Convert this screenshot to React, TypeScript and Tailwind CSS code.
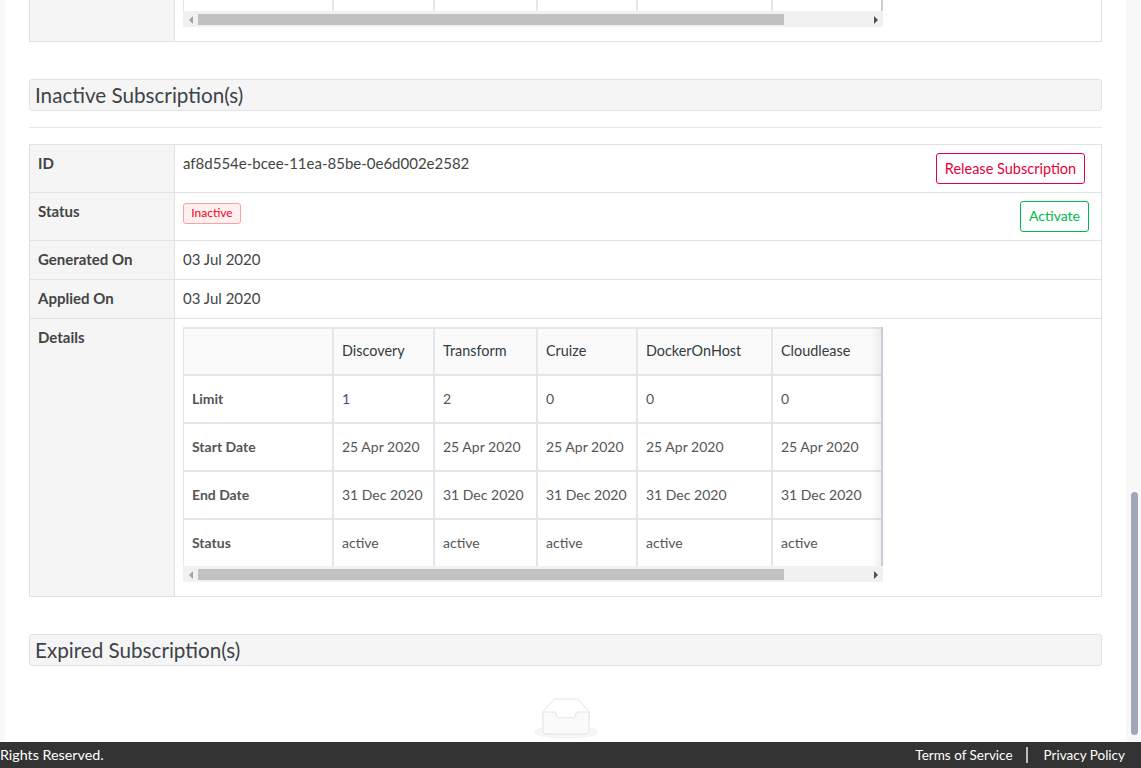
import React from "react";

const cols = ["Discovery", "Transform", "Cruize", "DockerOnHost", "Cloudlease"];
const widths = [151, 101, 103, 100, 135, 110];
const rows = [
  { label: "Limit", values: ["1", "2", "0", "0", "0"] },
  { label: "Start Date", values: Array(5).fill("25 Apr 2020") },
  { label: "End Date", values: Array(5).fill("31 Dec 2020") },
  { label: "Status", values: Array(5).fill("active") },
];

function Scrollbar() {
  return (
    <div className="flex h-[16px] w-[700px] items-start bg-[#f1f1f1] pt-[3px]">
      <div className="flex h-[11px] w-[15px] items-center justify-center">
        <div className="h-0 w-0 border-y-[4px] border-r-[4px] border-y-transparent border-r-[#a3a3a3]" />
      </div>
      <div className="h-[11px] w-[586px] bg-[#c1c1c1]" />
      <div className="flex-1" />
      <div className="flex h-[11px] w-[15px] items-center justify-center">
        <div className="h-0 w-0 border-y-[4px] border-l-[4px] border-y-transparent border-l-[#505050]" />
      </div>
    </div>
  );
}

function InnerTable() {
  return (
    <div className="relative w-[700px]">
      <div className="overflow-hidden">
        <table className="w-[700px] table-fixed border-separate border-spacing-0 text-[14px] text-[#555]">
          <colgroup>
            {widths.map((w, i) => (
              <col key={i} style={{ width: w }} />
            ))}
          </colgroup>
          <thead>
            <tr className="h-[49px] bg-[#fafafa]">
              <th className="border-y-2 border-r-2 border-l border-[#e4e7ea] font-normal" />
              {cols.map((c) => (
                <th key={c} className="border-y-2 border-r-2 border-[#e4e7ea] pb-[2px] pl-[8px] text-left text-[14.4px] font-normal text-[#343a40]">
                  {c}
                </th>
              ))}
            </tr>
          </thead>
          <tbody>
            {rows.map((r, ri) => {
              const last = ri === rows.length - 1;
              return (
                <tr key={r.label} className={last ? "h-[46px]" : "h-[48px]"}>
                  <td className={`border-r-2 border-l border-[#e4e7ea] pb-[2px] pl-[8px] font-bold ${last ? "" : "border-b-2"}`}>{r.label}</td>
                  {r.values.map((v, i) => (
                    <td
                      key={i}
                      className={`whitespace-nowrap border-r-2 border-[#e4e7ea] pb-[2px] pl-[8px] ${last ? "" : "border-b-2"} ${r.label === "Limit" && i === 0 ? "text-[#44507a]" : ""}`}
                    >
                      {v}
                    </td>
                  ))}
                </tr>
              );
            })}
          </tbody>
        </table>
      </div>
      <div className="absolute top-0 right-0 bottom-0 w-[12px] bg-gradient-to-l from-[#00000010] to-transparent" />
      <div className="absolute top-0 right-0 bottom-0 w-[2px] bg-[#c9ced6]" />
    </div>
  );
}

function Row({ label, h, children }: { label: string; h: string; children: React.ReactNode }) {
  return (
    <div className={`flex border-b border-[#dee2e6] ${h}`}>
      <div className="w-[145px] shrink-0 border-r border-[#dee2e6] bg-[#f5f5f5] pt-[8px] pl-[8px] text-[15px] leading-[21px] font-bold text-[#444]">
        {label}
      </div>
      <div className="flex-1 pt-[8px] pl-[8px] text-[15px] leading-[21px] text-[#444]">{children}</div>
    </div>
  );
}

function SectionTitle({ children }: { children: React.ReactNode }) {
  return (
    <div className="h-[32px] rounded-[3px] border border-[#e3e3e3] bg-[#f5f5f5] pl-[5px] text-[20.65px] leading-[30px] text-[#3d4349]">
      {children}
    </div>
  );
}

export default function App() {
  return (
    <div className="flex h-[768px] w-[1141px] flex-col overflow-hidden bg-[#f8f8f8] [font-family:Lato,'Noto_Sans',sans-serif]">
      <div className="relative flex-1 overflow-hidden">
        <div className="ml-[5px] h-full w-[1121px] bg-white px-[24px]">
          <div className="w-[1073px]">
            <div className="flex h-[42px] border-r border-b border-l border-[#dee2e6]">
              <div className="w-[145px] shrink-0 border-r border-[#dee2e6] bg-[#f5f5f5]" />
              <div className="pl-[8px]">
                <div className="relative flex h-[11px] w-[700px]">
                  {widths.map((w, i) => (
                    <div key={i} className="h-full border-r-2 border-[#e4e7ea] first:border-l" style={{ width: w }} />
                  ))}
                  <div className="absolute top-0 right-0 bottom-0 w-[2px] bg-[#c9ced6]" />
                </div>
                <Scrollbar />
              </div>
            </div>

            <div className="mt-[37px]">
              <SectionTitle>Inactive Subscription(s)</SectionTitle>
            </div>
            <div className="mt-[16px] h-px bg-[#e6e8ea]" />

            <div className="mt-[16px] border-t border-r border-l border-[#dee2e6]">
              <Row label="ID" h="h-[48px]">
                <div className="flex justify-between">
                  <span>af8d554e-bcee-11ea-85be-0e6d002e2582</span>
                  <button className="mr-[16px] h-[31px] w-[149px] rounded-[3px] border border-[#e6003d] text-[14.5px] leading-[26px] text-[#e6003d]">
                    Release Subscription
                  </button>
                </div>
              </Row>
              <Row label="Status" h="h-[48px]">
                <div className="flex items-start justify-between">
                  <span className="mt-[2px] flex h-[21px] w-[58px] items-center justify-center rounded-[3px] border border-[#ff9f9f] bg-[#fff0f0] pb-[2px] text-[12px] leading-[17px] text-[#f5001e]">
                    Inactive
                  </span>
                  <button className="mr-[12px] h-[31px] w-[69px] rounded-[3px] border border-[#00b84c] pb-[2px] text-[14px] leading-[26px] text-[#00b84c]">
                    Activate
                  </button>
                </div>
              </Row>
              <Row label="Generated On" h="h-[39px]">
                03 Jul 2020
              </Row>
              <Row label="Applied On" h="h-[39px]">
                03 Jul 2020
              </Row>
              <Row label="Details" h="h-[278px]">
                <InnerTable />
                <Scrollbar />
              </Row>
            </div>

            <div className="mt-[37px]">
              <SectionTitle>Expired Subscription(s)</SectionTitle>
            </div>

            <div className="mt-[32px] flex justify-center">
              <svg width="64" height="41" viewBox="0 0 64 41">
                <g transform="translate(0 1)" fill="none" fillRule="evenodd">
                  <ellipse fill="#f5f5f5" cx="32" cy="33" rx="32" ry="7" />
                  <g fillRule="nonzero" stroke="#e4e4e4">
                    <path d="M55 12.76L44.854 1.258C44.367.474 43.656 0 42.907 0H21.093c-.749 0-1.46.474-1.947 1.257L9 12.761V22h46v-9.24z" />
                    <path
                      d="M41.613 15.931c0-1.605.994-2.93 2.227-2.931H55v18.137C55 33.26 53.68 35 52.05 35h-40.1C10.32 35 9 33.259 9 31.137V13h11.16c1.233 0 2.227 1.323 2.227 2.928v.022c0 1.605 1.005 2.901 2.237 2.901h14.752c1.232 0 2.237-1.308 2.237-2.913v-.007z"
                      fill="#fafafa"
                    />
                  </g>
                </g>
              </svg>
            </div>
          </div>
        </div>
        <div className="absolute top-[492px] left-[1131px] h-[243px] w-[7px] rounded-[4px] bg-[#a0a7b8]" />
      </div>
      <footer className="flex h-[26px] shrink-0 items-center justify-between bg-[#333] pr-[16px] text-[14px] leading-[26px] text-white">
        <span className="text-[14.3px]">Rights Reserved.</span>
        <div className="flex items-center text-[13.5px]">
          <span>Terms of Service</span>
          <span className="mr-[16px] ml-[13px] h-[16px] w-[2px] bg-[#bbb]" />
          <span>Privacy Policy</span>
        </div>
      </footer>
    </div>
  );
}
